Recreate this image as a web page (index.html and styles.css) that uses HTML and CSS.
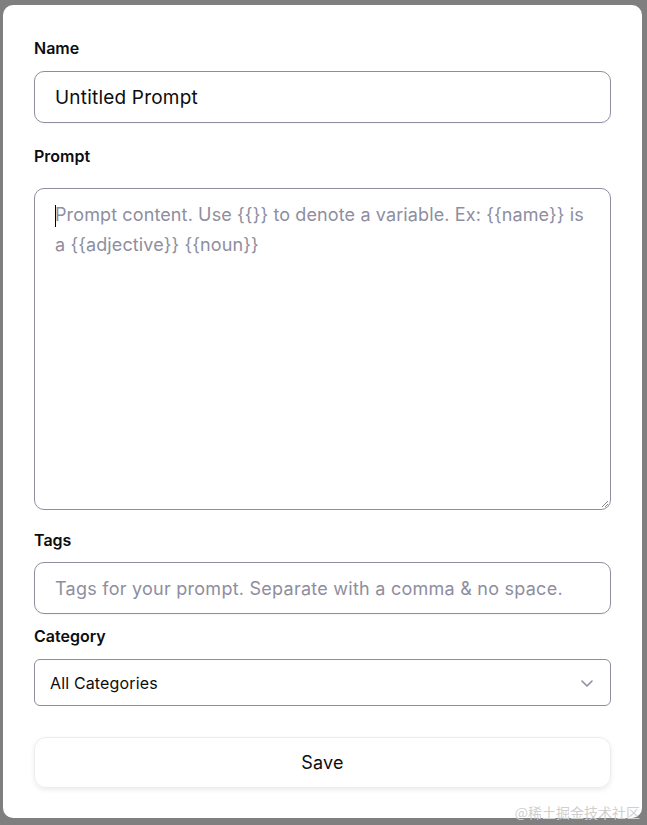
FILE: index.html
```html
<!DOCTYPE html>
<html>
<head>
<meta charset="utf-8">
<link rel="stylesheet" href="styles.css">
</head>
<body>
<div class="modal">
  <div class="label first">Name</div>
  <div class="field"><span class="value">Untitled Prompt</span></div>
  <div class="label prompt">Prompt</div>
  <div class="textarea">
    <span class="caret"></span><span class="placeholder tight">Prompt content. Use {{}} to denote a variable. Ex: {{name}} is a {{adjective}} {{noun}}</span>
    <svg class="grip" width="10" height="10" viewBox="0 0 10 10"><path d="M9 3 L3 9 M9 6 L6 9" stroke="#888" stroke-width="1" fill="none"/></svg>
  </div>
  <div class="label tags">Tags</div>
  <div class="field"><span class="placeholder">Tags for your prompt. Separate with a comma &amp; no space.</span></div>
  <div class="label category">Category</div>
  <div class="select">
    <span>All Categories</span>
    <svg width="16" height="16" viewBox="0 0 16 16"><path d="M3 6 L8 11 L13 6" stroke="#8e8ea0" stroke-width="1.6" fill="none" stroke-linecap="round" stroke-linejoin="round"/></svg>
  </div>
  <div class="save">Save</div>
  <div class="watermark">@稀土掘金技术社区</div>
</div>
</body>
</html>
```
FILE: styles.css
```css
html, body {
  margin: 0;
  padding: 0;
  background: #7f7f7f;
  height: 825px;
  overflow: hidden;
}
body {
  font-family: Inter, "Noto Sans", "Noto Sans CJK SC", sans-serif;
  color: #0d0d0d;
}
.modal {
  position: relative;
  box-sizing: border-box;
  margin: 5px 5px 0 3px;
  width: 639px;
  height: 813px;
  background: #fff;
  border-radius: 10px;
  padding: 31px 31px 0 31px;
}
.label {
  font-size: 16px;
  font-weight: 600;
  line-height: 24px;
  margin-top: 21px;
  margin-bottom: 11px;
  letter-spacing: 0;
}
.label.first { margin-top: 0; }
.label.prompt { margin-bottom: 20px; }
.label.tags { margin-top: 18px; margin-bottom: 10px; }
.label.category { margin-top: 10px; }
.field {
  box-sizing: border-box;
  height: 52px;
  border: 1px solid #8e8ea0;
  border-radius: 10px;
  display: flex;
  align-items: center;
  padding: 0 20px;
  font-size: 18px;
  box-shadow: 0 1px 2px rgba(0,0,0,0.04);
}
.value { color: #0d0d0d; font-size: 19px; letter-spacing: 0.2px; }
.placeholder { color: #8e8ea0; letter-spacing: 0.25px; }
.placeholder.tight { letter-spacing: 0.12px; }
.textarea {
  position: relative;
  box-sizing: border-box;
  height: 322px;
  border: 1px solid #8e8ea0;
  border-radius: 10px;
  padding: 11px 20px;
  font-size: 18px;
  line-height: 30px;
}
.caret {
  position: absolute;
  left: 20px;
  top: 16px;
  width: 1px;
  height: 22px;
  background: #000;
}
.grip { position: absolute; right: 1px; bottom: 1px; }
.select {
  box-sizing: border-box;
  height: 47px;
  border: 1px solid #8e8ea0;
  border-radius: 6px;
  display: flex;
  align-items: center;
  justify-content: space-between;
  padding: 0 15px 0 15px;
  font-size: 16px;
  letter-spacing: 0.15px;
}
.save {
  box-sizing: border-box;
  margin-top: 31px;
  height: 51px;
  border: 1px solid #ececf1;
  border-radius: 12px;
  display: flex;
  align-items: center;
  justify-content: center;
  font-size: 18px;
  letter-spacing: 0.2px;
  box-shadow: 0 2px 5px rgba(0,0,0,0.08);
}
.watermark {
  position: absolute;
  right: 2px;
  bottom: -4px;
  font-size: 14px;
  color: #cfcfcf;
  font-family: "Noto Sans CJK SC", sans-serif;
}
```
